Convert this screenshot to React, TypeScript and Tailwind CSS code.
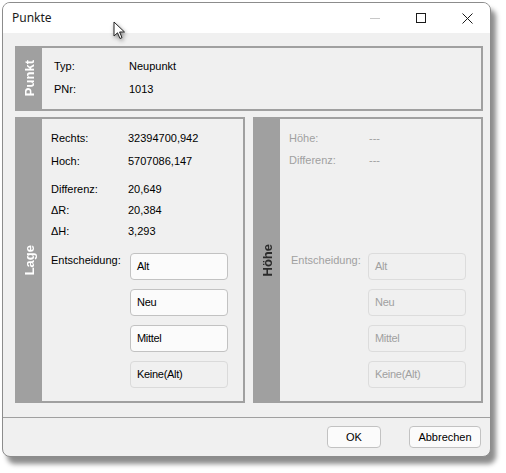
import React from "react";

const font = { fontFamily: '"Liberation Sans", Arial, sans-serif' };

function Btn({ label, enabled, dim }: { label: string; enabled: boolean; dim?: boolean }) {
  const cls = enabled
    ? dim
      ? "border-[#dadada] bg-[#f0f0f0] text-black"
      : "border-[#c2c2c2] bg-[#fbfbfb] text-black"
    : "border-[#dcdcdc] bg-[#f0f0f0] text-[#a0a0a0]";
  return (
    <div
      className={`h-[27px] w-[98px] rounded-[4px] border pl-[6px] text-[11px] leading-[25px] tracking-[-0.3px] ${cls}`}
    >
      {label}
    </div>
  );
}

function Strip({ label, dark }: { label: string; dark?: boolean }) {
  return (
    <div className="flex w-[25px] shrink-0 items-center justify-center bg-[#a0a0a0]">
      <span
        className={`rotate-180 text-[13px] font-bold leading-[14px] [writing-mode:vertical-rl] ${
          dark ? "text-[#2a2a2a]" : "text-white"
        }`}
      >
        {label}
      </span>
    </div>
  );
}

function Row({
  label,
  value,
  col,
  cls,
  mt,
}: {
  label: string;
  value: string;
  col: string;
  cls: string;
  mt: string;
}) {
  return (
    <div className={`flex h-[20px] items-center ${mt} ${cls}`}>
      <div className={col}>{label}</div>
      <div>{value}</div>
    </div>
  );
}

function Decision({ enabled }: { enabled: boolean }) {
  const text = enabled ? "text-black" : "text-[#a0a0a0]";
  return (
    <div className="flex">
      <div className={`w-[79px] pt-[1px] text-[11px] leading-[13px] ${text} ${enabled ? "" : "pl-[2px]"}`}>
        Entscheidung:
      </div>
      <div className="flex flex-col gap-[9px]">
        <Btn label="Alt" enabled={enabled} />
        <Btn label="Neu" enabled={enabled} />
        <Btn label="Mittel" enabled={enabled} />
        <Btn label="Keine(Alt)" enabled={enabled} dim />
      </div>
    </div>
  );
}

export default function App() {
  return (
    <div className="relative h-[473px] w-[506px] overflow-hidden bg-white pl-[2px] pt-[2px]" style={font}>
      <div className="flex h-[455px] w-[489px] flex-col overflow-hidden rounded-[8px] border border-[#8c8c8c] bg-[#f0f0f0] shadow-[5px_7px_5px_rgba(0,0,0,0.45)]">
        {/* Title bar */}
        <div className="flex h-[30px] shrink-0 items-center bg-white">
          <div className="pl-[9px] text-[12px] text-[#1a1a1a]" style={{ fontFamily: '"Noto Sans", "Open Sans", sans-serif' }}>
            Punkte
          </div>
          <div className="ml-auto flex items-center">
            <div className="flex h-[30px] w-[46px] items-center justify-center">
              <div className="h-[1px] w-[10px] bg-[#c8c8c8]" />
            </div>
            <div className="flex h-[30px] w-[46px] items-center justify-center">
              <div className="h-[10px] w-[10px] border border-[#1a1a1a]" />
            </div>
            <div className="flex h-[30px] w-[46px] items-center justify-center">
              <svg width="11" height="11" viewBox="0 0 11 11">
                <path d="M0.5 0.5 L10.5 10.5 M10.5 0.5 L0.5 10.5" stroke="#1a1a1a" strokeWidth="1" />
              </svg>
            </div>
          </div>
        </div>

        {/* Content */}
        <div className="flex flex-1 flex-col pl-[12px] pt-[13px] text-[11px]">
          {/* Punkt */}
          <div className="flex h-[65px] w-[468px] border-2 border-[#a0a0a0]">
            <Strip label="Punkt" />
            <div className="flex flex-col pl-[12px] pt-[7px] text-black">
              <div className="flex h-[23px] items-center">
                <div className="w-[75px]">Typ:</div>
                <div>Neupunkt</div>
              </div>
              <div className="flex h-[23px] items-center">
                <div className="w-[75px]">PNr:</div>
                <div>1013</div>
              </div>
            </div>
          </div>

          <div className="mt-[6px] flex gap-[8px]">
            {/* Lage */}
            <div className="flex h-[286px] w-[230px] border-2 border-[#a0a0a0]">
              <Strip label="Lage" />
              <div className="flex flex-col pl-[9px] pt-[9px]">
                <Row label="Rechts:" value="32394700,942" col="w-[77px]" cls="text-black" mt="" />
                <Row label="Hoch:" value="5707086,147" col="w-[77px]" cls="text-black" mt="mt-[3px]" />
                <Row label="Differenz:" value="20,649" col="w-[77px]" cls="text-black" mt="mt-[8px]" />
                <Row label="ΔR:" value="20,384" col="w-[77px]" cls="text-black" mt="mt-[1px]" />
                <Row label="ΔH:" value="3,293" col="w-[77px]" cls="text-black" mt="mt-[1px]" />
                <div className="mt-[12px]">
                  <Decision enabled />
                </div>
              </div>
            </div>

            {/* Höhe */}
            <div className="flex h-[286px] w-[230px] border-2 border-[#a0a0a0]">
              <Strip label="Höhe" dark />
              <div className="flex flex-col pl-[9px] pt-[9px]">
                <Row label="Höhe:" value="---" col="w-[80px]" cls="text-[#a0a0a0]" mt="" />
                <Row label="Differenz:" value="---" col="w-[80px]" cls="text-[#a0a0a0]" mt="mt-[2px]" />
                <div className="mt-[83px]">
                  <Decision enabled={false} />
                </div>
              </div>
            </div>
          </div>
        </div>

        {/* Footer */}
        <div className="flex h-[39px] shrink-0 items-start justify-end gap-[28px] border-t border-[#a0a0a0] pr-[9px] pt-[8px]">
          <div className="flex h-[22px] w-[54px] items-center justify-center rounded-[4px] border border-[#c2c2c2] bg-[#fbfbfb] text-[11px] text-black">
            OK
          </div>
          <div className="flex h-[22px] w-[72px] items-center justify-center rounded-[4px] border border-[#c2c2c2] bg-[#fbfbfb] text-[11px] text-black">
            Abbrechen
          </div>
        </div>
      </div>

      {/* Mouse cursor */}
      <svg
        className="absolute left-[113px] top-[21px] drop-shadow-[1px_2px_2px_rgba(0,0,0,0.45)]"
        width="14"
        height="20"
        viewBox="0 0 14 20"
      >
        <path
          d="M1 1 L1 15 L4.5 11.8 L7 17.5 L9 16.6 L6.6 11 L11.5 11 Z"
          fill="white"
          stroke="#222"
          strokeWidth="1"
          strokeLinejoin="round"
        />
      </svg>
    </div>
  );
}
